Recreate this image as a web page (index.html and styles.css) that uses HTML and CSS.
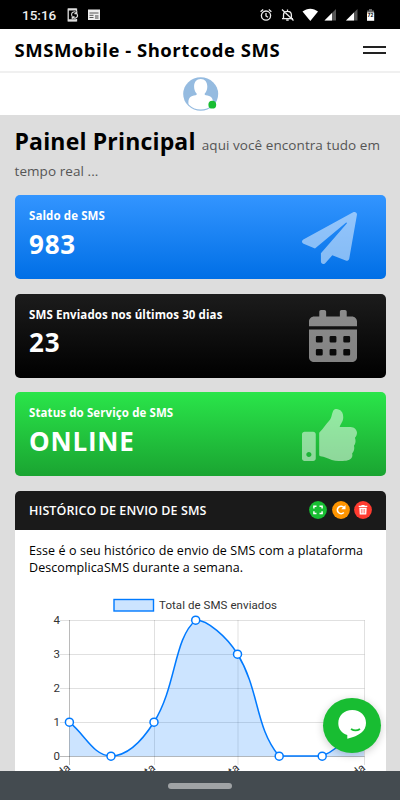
FILE: index.html
```html
<!DOCTYPE html>
<html lang="pt-BR">
<head>
  <meta charset="UTF-8" />
  <meta name="viewport" content="width=device-width, initial-scale=1.0" />
  <title>SMSMobile - Shortcode SMS</title>
  <link rel="stylesheet" href="styles.css">
</head>
<body>
  <div class="statusbar">
    <span class="clock">15:16</span>
    <svg class="status-left" width="36" height="14" viewBox="0 0 36 14">
      <path d="M9.5 3V1.2H1.2v11.6h8.3V11" fill="none" stroke="#ddd" stroke-width="1.3"/>
      <path d="M1 1.6h8.5M1 12.2h8.5" stroke="#ddd" stroke-width="2"/>
      <path d="M5 8a2.6 2.6 0 0 1 4.6-2.8M10 6a2.6 2.6 0 0 1-4.5 2.9M9.8 3v2.6H7.4M5.2 11V8.7h2.4" fill="none" stroke="#ddd" stroke-width="1.1"/>
      <rect x="21" y="1.5" width="12" height="10.5" fill="#eee"/>
      <path d="M22.5 5h9M22.5 7.3h4M22.5 9.5h4" stroke="#555" stroke-width="1"/>
      <path d="M28 7h3.5v4H28z" fill="#999"/>
    </svg>
    <svg class="status-right" width="120" height="14" viewBox="0 0 120 14">
      <g fill="none" stroke="#eee" stroke-width="1.3">
        <circle cx="10" cy="7.6" r="4.6"/>
        <path d="M10 5v3l2 1.2M4.6 3.7 7.2 1.5M15.4 3.7 12.8 1.5"/>
        <path d="M27.5 10.5V7c0-2.2 1.3-3.7 4-3.7s3.9 1.5 3.9 3.7v3.5M26 10.6h11M31.5 3.5V1.5M26 1.5l11.5 11M30.2 12.2h2.5"/>
      </g>
      <path d="M46.5 3.6C51-.3 57.500-.3 62 3.600L54.300 13z" fill="#fff"/>
      <path d="M80 1v11.500H68.500z" fill="#555"/>
      <path d="M76 5v7.500h-7.500z" fill="#fff"/>
      <path d="M101.500 1v11.500H90z" fill="#555"/>
      <path d="M98 4.500v8h-8z" fill="#fff"/>
      <path d="M113 1h3v1.400h2V5h-7V2.400h2z" fill="#666"/>
      <path d="M111 4.500h7.200v8.300H111z" fill="#fff"/>
      <text x="111.600" y="9" class="battery">72</text>
    </svg>
  </div>

  <header class="navbar">
    <span class="brand">SMSMobile - Shortcode SMS</span>
    <span class="toggle"></span>
  </header>

  <div class="profile">
    <svg width="36" height="35" viewBox="0 0 36 35">
      <clipPath id="round"><ellipse cx="17.700" cy="17" rx="16.300" ry="15.600"/></clipPath>
      <ellipse cx="17.700" cy="17" rx="17.500" ry="16.700" fill="#95bbe0"/>
      <g clip-path="url(#round)" fill="#fff">
        <path d="M17.700 2c4.200 0 6.600 3.100 6.600 7.700 0 2.600-.8 4.800-2.300 6.500-.8.900-.3 1.800.8 2 5 .7 7.200 2.300 7.200 7.300v4.700c-7 5.200-17.600 5.200-24.600 0V25.500c0-5 2.200-6.600 7.200-7.300 1.100-.2 1.600-1.100.8-2-1.500-1.700-2.300-3.900-2.300-6.500 0-4.600 2.400-7.700 6.600-7.700z"/>
      </g>
      <circle cx="29.300" cy="27.700" r="3.900" fill="#18bd32"/>
    </svg>
  </div>

  <main class="content">
    <h1 class="title">Painel Principal <small>aqui você encontra tudo em tempo real ...</small></h1>

    <div class="widget blue">
      <div>
        <div class="widget-label">Saldo de SMS</div>
        <div class="widget-value">983</div>
      </div>
      <svg class="widget-icon" width="55" height="52" viewBox="0 0 512 512" preserveAspectRatio="none">
        <path d="M476 3.200L12.500 270.600c-18.100 10.400-15.800 35.600 2.200 43.200L121 358.400l287.300-253.200c5.500-4.900 13.300 2.600 8.600 8.300L176 407v80.500c0 23.600 28.500 32.900 42.500 15.800L282 426l124.600 52.200c14.200 6 30.400-2.900 33-18.200l72-432C515 7.800 493.300-6.800 476 3.200z"/>
      </svg>
    </div>

    <div class="widget black">
      <div>
        <div class="widget-label">SMS Enviados nos últimos 30 dias</div>
        <div class="widget-value">23</div>
      </div>
      <svg class="widget-icon" width="48" height="52" viewBox="0 0 448 512" preserveAspectRatio="none">
        <path fill-rule="evenodd" d="M0 464c0 26.500 21.500 48 48 48h352c26.500 0 48-21.500 48-48V192H0zM76 256h40q12 0 12 12v40q0 12-12 12H76q-12 0-12-12v-40q0-12 12-12zM204 256h40q12 0 12 12v40q0 12-12 12h-40q-12 0-12-12v-40q0-12 12-12zM332 256h40q12 0 12 12v40q0 12-12 12h-40q-12 0-12-12v-40q0-12 12-12zM76 384h40q12 0 12 12v40q0 12-12 12H76q-12 0-12-12v-40q0-12 12-12zM204 384h40q12 0 12 12v40q0 12-12 12h-40q-12 0-12-12v-40q0-12 12-12zM332 384h40q12 0 12 12v40q0 12-12 12h-40q-12 0-12-12v-40q0-12 12-12zM400 64h-48V16c0-8.800-7.200-16-16-16h-32c-8.800 0-16 7.200-16 16v48H160V16c0-8.800-7.200-16-16-16h-32c-8.800 0-16 7.200-16 16v48H48C21.500 64 0 85.500 0 112v48h448v-48c0-26.500-21.500-48-48-48z"/>
      </svg>
    </div>

    <div class="widget green">
      <div>
        <div class="widget-label">Status do Serviço de SMS</div>
        <div class="widget-value">ONLINE</div>
      </div>
      <svg class="widget-icon" width="55" height="52" viewBox="0 0 512 512" preserveAspectRatio="none">
        <path fill-rule="evenodd" d="M104 224H24c-13.255 0-24 10.745-24 24v240c0 13.255 10.745 24 24 24h80c13.255 0 24-10.745 24-24V248c0-13.255-10.745-24-24-24zM64 472c-13.255 0-24-10.745-24-24s10.745-24 24-24 24 10.745 24 24-10.745 24-24 24zM384 81.452c0 42.416-25.970 66.208-33.277 94.548h101.723c33.397 0 59.397 27.746 59.553 58.098.084 17.938-7.546 37.249-19.439 49.197l-.110.110c9.836 23.337 8.237 56.037-9.308 79.469 8.681 25.895-.069 57.704-16.382 74.757 4.298 17.598 2.244 32.575-6.148 44.632C440.202 511.587 389.616 512 346.839 512l-2.845-.001c-48.287-.017-87.806-17.598-119.560-31.725-15.957-7.099-36.821-15.887-52.651-16.178-6.540-.120-11.783-5.457-11.783-11.998v-213.770c0-3.200 1.282-6.271 3.558-8.521 39.614-39.144 56.648-80.587 89.117-113.111 14.804-14.832 20.188-37.236 25.393-58.902C282.515 39.293 291.817 0 312 0c24 0 72 8 72 81.452z"/>
      </svg>
    </div>

    <section class="panel">
      <div class="panel-heading">
        <span>HISTÓRICO DE ENVIO DE SMS</span>
        <div class="panel-buttons">
          <svg width="18" height="18" viewBox="0 0 18 18"><circle cx="9" cy="9" r="8.900" fill="#18bd32"/><path d="M4.900 7.500V5.200h2.600M10.500 5.200h2.600v2.300M13.100 10.300v2.300h-2.600M7.500 12.600H4.900v-2.300" fill="none" stroke="#fff" stroke-width="1.500"/></svg>
          <svg width="18" height="18" viewBox="0 0 18 18"><circle cx="9" cy="9" r="8.900" fill="#ff9500"/><path d="M11.800 11.500A3.700 3.700 0 1 1 12 6.700" fill="none" stroke="#fff" stroke-width="1.600"/><path d="M13.500 4v4.300H9.200z" fill="#fff"/></svg>
          <svg width="18" height="18" viewBox="0 0 18 18"><circle cx="9" cy="9" r="8.900" fill="#ff3b30"/><path d="M4.700 4.700h2.500l.5-.8h2.600l.5.800h2.500V6H4.700zM5.300 6.700h7.400l-.4 6.700H5.700z" fill="#fff"/><path d="M7.400 8v4.300M9 8v4.300M10.600 8v4.300" stroke="#ff3b30" stroke-width=".6"/></svg>
        </div>
      </div>
      <div class="panel-body">
        <p>Esse é o seu histórico de envio de SMS com a plataforma DescomplicaSMS durante a semana.</p>
        <svg class="chart" width="371" height="200" viewBox="15 590 371 200">
          <rect x="114" y="599.500" width="39.500" height="11.500" fill="#cce4ff" stroke="#007aff" stroke-width="1.400"/>
          <text x="159" y="608.500" textLength="118">Total de SMS enviados</text>
          <path class="grid" d="M60 620.500h304.500M60 654.500h304.500M60 688.500h304.500M60 722.500h304.500M154.500 620v145M238 620v145M364.500 620v145"/>
          <path class="axis" d="M60 756.500h304.500M69.500 620v145"/>
          <path class="area" d="M69.500 722.200C86 736 94 756 111 756S142.700 740 154 722C176.700 685.700 173.600 638.200 196 620C207 620 226.600 636.200 237.500 654C259.800 690.500 254.700 726.600 279 756H322C341 748.400 347 735.600 364 722V756.300H69.500z"/>
          <path class="line" d="M69.500 722.200C86 736 94 756 111 756S142.700 740 154 722C176.700 685.700 173.600 638.200 196 620C207 620 226.600 636.200 237.500 654C259.800 690.500 254.700 726.600 279 756H322C341 748.400 347 735.600 364 722"/>
          <g class="points">
            <circle cx="69.400" cy="722.200" r="4"/>
            <circle cx="111" cy="756.200" r="4"/>
            <circle cx="154" cy="722.200" r="4"/>
            <circle cx="195.700" cy="620.200" r="4"/>
            <circle cx="237.500" cy="654.200" r="4"/>
            <circle cx="279.200" cy="756.200" r="4"/>
            <circle cx="322.200" cy="756.200" r="4"/>
            <circle cx="364" cy="722.200" r="4"/>
          </g>
          <g text-anchor="end">
            <text x="60" y="623.700">4</text>
            <text x="60" y="657.700">3</text>
            <text x="60" y="691.700">2</text>
            <text x="60" y="725.700">1</text>
            <text x="60" y="759.700">0</text>
            <text transform="translate(71 769) rotate(-40)">Segunda</text>
            <text transform="translate(156 769) rotate(-40)">Quarta</text>
            <text transform="translate(240 769) rotate(-40)">Sexta</text>
            <text transform="translate(366 769) rotate(-40)">Segunda</text>
          </g>
        </svg>
      </div>
    </section>
  </main>

  <div class="chat">
    <svg width="30" height="30" viewBox="0 0 30 30">
      <path d="M15.300 1C23.500 1 29 6.600 29 14c0 8-6.500 12.800-18.700 15.700v-3.700C4.600 24.300 1.300 20 1.300 14.300 1.300 6.700 7 1 15.300 1z" fill="#fff"/>
      <path d="M14 20q4.600 2.800 9 0" fill="none" stroke="#18bd32" stroke-width="1.900"/>
    </svg>
  </div>
  <div class="bottombar"><span></span></div>
</body>
</html>
```
FILE: styles.css
```css
* {
  box-sizing: border-box;
}
body {
  margin: 0;
  height: 800px;
  overflow: hidden;
  background: #ddd;
  font-family: "Open Sans", "Noto Sans", sans-serif;
  color: #000;
  display: flex;
  flex-direction: column;
}
.statusbar {
  flex: none;
  height: 29px;
  background: #000;
  color: #eee;
  display: flex;
  align-items: center;
  padding: 0 24px 0 22px;
}
.clock {
  font: 500 13.5px Roboto, sans-serif;
  width: 45px;
}
.status-right {
  margin-left: auto;
}
.battery {
  font: bold 5px Roboto, sans-serif;
}
.navbar {
  flex: none;
  height: 44px;
  background: #fff;
  border-bottom: 2px solid #f0f0f0;
  display: flex;
  align-items: center;
  justify-content: space-between;
  padding: 0 14px 0 14.5px;
}
.brand {
  font-size: 18.5px;
  font-weight: 700;
  letter-spacing: 0.52px;
  line-height: 42px;
  white-space: nowrap;
}
.toggle {
  width: 23px;
  height: 8px;
  border-top: 2px solid #222;
  border-bottom: 2px solid #222;
}
.profile {
  flex: none;
  height: 42px;
  background: #fff;
  padding: 4px 0 0 1px;
  text-align: center;
  line-height: 0;
}
.content {
  flex: 1;
  min-height: 0;
  overflow: hidden;
  padding: 13px 14px 0 14.5px;
}
.title {
  margin: 0 0 11.2px;
  height: 56px;
  font-size: 23px;
  font-weight: 700;
  letter-spacing: 0.17px;
  line-height: 26px;
}
.title small {
  font-size: 13.5px;
  font-weight: 400;
  letter-spacing: 0.07px;
  line-height: 1;
  color: #555;
}
.widget {
  height: 84.2px;
  margin-bottom: 14.3px;
  padding: 13px 29px 0 14.5px;
  border-radius: 5px;
  color: #fff;
  display: flex;
  justify-content: space-between;
}
.blue {
  background: linear-gradient(#3395ff, #006fe6);
}
.black {
  background: linear-gradient(#1c1c1c, #000);
}
.green {
  background: linear-gradient(#2ae54a, #1aa431);
}
.widget-label {
  font-size: 11.5px;
  font-weight: 700;
  letter-spacing: 0.1px;
  line-height: 16px;
  white-space: nowrap;
}
.widget-value {
  margin-top: 2.7px;
  font-size: 26px;
  font-weight: 700;
  letter-spacing: 0.8px;
  line-height: 34px;
}
.widget-icon {
  margin-top: 3.5px;
  fill: #fff;
  opacity: 0.5;
}
.panel {
  background: #fff;
  border-radius: 5px 5px 0 0;
  overflow: hidden;
}
.panel-heading {
  height: 39px;
  padding: 0 14px 0 14.5px;
  background: #1a1a1a;
  color: #fff;
  font-size: 12.5px;
  font-weight: 600;
  letter-spacing: 0.09px;
  display: flex;
  align-items: center;
  justify-content: space-between;
  white-space: nowrap;
}
.panel-buttons {
  display: flex;
  gap: 4.4px;
}
.panel-body p {
  margin: 0;
  padding: 12.5px 14px 0 14.5px;
  height: 60px;
  font-size: 12.5px;
  letter-spacing: 0.08px;
  line-height: 17px;
}
.chart {
  display: block;
}
.chart text {
  font: 11.5px Roboto, sans-serif;
  fill: #333;
}
.grid {
  stroke: rgba(0, 0, 0, 0.12);
  fill: none;
}
.axis {
  stroke: rgba(0, 0, 0, 0.27);
  fill: none;
}
.area {
  fill: rgba(0, 122, 255, 0.2);
}
.line {
  fill: none;
  stroke: #007aff;
  stroke-width: 1.5px;
}
.points {
  fill: #fff;
  stroke: #007aff;
  stroke-width: 1.5px;
}
.chat {
  position: absolute;
  left: 323px;
  top: 698px;
  width: 58px;
  height: 55px;
  border-radius: 50%;
  background: #18bd32;
  box-shadow: 0 2px 8px rgba(0, 0, 0, 0.2);
  padding: 11px 0 0 14px;
}
.bottombar {
  flex: none;
  height: 29px;
  background: #444b50;
  display: flex;
  align-items: center;
  justify-content: center;
}
.bottombar span {
  width: 64px;
  height: 6px;
  border-radius: 3px;
  background: #a0a3a5;
}
```
